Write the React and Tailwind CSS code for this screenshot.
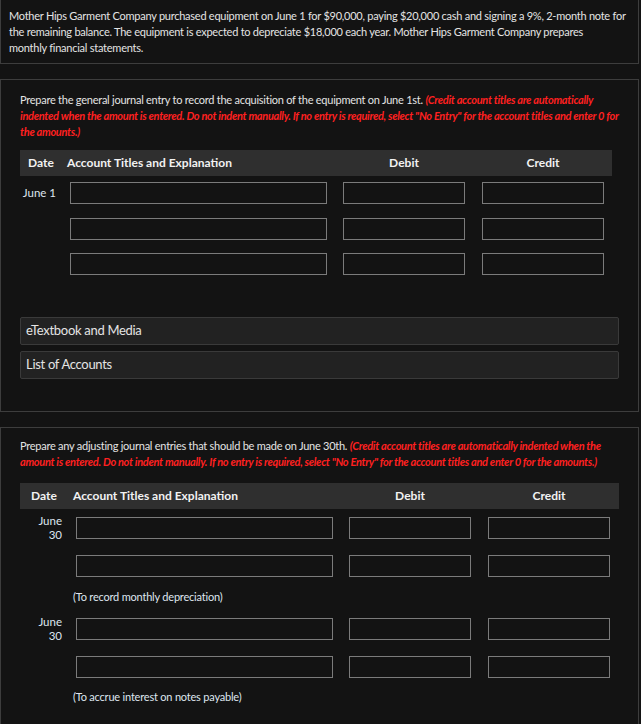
import React from "react";

const note =
  '(Credit account titles are automatically indented when the amount is entered. Do not indent manually. If no entry is required, select "No Entry" for the account titles and enter 0 for the amounts.)';

function Box({ w }) {
  return <div className={`h-[22px] border border-[#7b7b7b] bg-[#131313] ${w}`}></div>;
}

function Header({ dateCol, datePad, acctCol, wide }) {
  return (
    <div
      className={`flex h-[26px] items-center bg-[#2f2f2f] font-bold text-[12px] text-[#f2f2f2] ${
        wide ? "w-[599px]" : "w-[592px]"
      }`}
    >
      <div className={`${dateCol} ${datePad}`}>Date</div>
      <div className={acctCol}>Account Titles and Explanation</div>
      <div className="ml-[8px] w-[122px] text-center">Debit</div>
      <div className="ml-[17px] w-[122px] text-center">Credit</div>
    </div>
  );
}

function Row({ date, dateCol, acctCol, className }) {
  return (
    <div className={`flex items-center ${className || ""}`}>
      <div className={`${dateCol} pr-[11px] text-right leading-[14px] text-[11.5px] text-[#dfe6ef]`}>{date}</div>
      <div className={`${acctCol} pl-[3px]`}>
        <Box w="w-[257px]" />
      </div>
      <div className="ml-[8px]">
        <Box w="w-[122px]" />
      </div>
      <div className="ml-[17px]">
        <Box w="w-[122px]" />
      </div>
    </div>
  );
}

const juneThirty = (
  <>
    June
    <br />
    30
  </>
);

export default function App() {
  return (
    <div
      className="min-h-screen w-[641px] bg-[#131313] text-[11px] text-[#e4e4e4] pb-[40px]"
      style={{ fontFamily: "Lato, 'Open Sans', sans-serif" }}
    >
      {/* problem statement */}
      <div className="w-[639px] border border-t-0 border-[#3d3d3d] px-[8px] pt-[8px] pb-[7px] leading-[16px] tracking-[-0.25px]">
        Mother Hips Garment Company purchased equipment on June 1 for $90,000, paying $20,000 cash and signing a 9%,
        2-month note for
        <br />
        the remaining balance. The equipment is expected to depreciate $18,000 each year. Mother Hips Garment Company
        prepares
        <br />
        monthly financial statements.
      </div>

      {/* part 1 */}
      <div className="mt-[15px] w-[639px] border border-[#3d3d3d] px-[19px] pt-[12px] pb-[32px]">
        <p className="leading-[16px] tracking-[-0.25px]">
          Prepare the general journal entry to record the acquisition of the equipment on June 1st.{" "}
          <span className="font-bold italic tracking-[-0.3px] text-[#ff2020]">{note}</span>
        </p>
        <div className="mt-[10px]">
          <Header dateCol="w-[47px]" datePad="pl-[8px]" acctCol="w-[268px]" />
          <Row className="mt-[6px]" date="June 1" dateCol="w-[47px]" acctCol="w-[268px]" />
          <Row className="mt-[14px]" date="" dateCol="w-[47px]" acctCol="w-[268px]" />
          <Row className="mt-[13px]" date="" dateCol="w-[47px]" acctCol="w-[268px]" />
        </div>
        <div className="mt-[42px] flex h-[28px] w-[599px] items-center rounded-[2px] border border-[#3a3a3a] bg-[#222222] px-[5px] text-[13px] tracking-[-0.3px]">
          eTextbook and Media
        </div>
        <div className="mt-[6px] flex h-[28px] w-[599px] items-center rounded-[2px] border border-[#3a3a3a] bg-[#222222] px-[5px] text-[13px] tracking-[-0.3px]">
          List of Accounts
        </div>
      </div>

      {/* part 2 */}
      <div className="mt-[15px] w-[639px] border border-b-0 border-[#3d3d3d] px-[19px] pt-[10px] pb-[20px]">
        <p className="leading-[16px] tracking-[-0.25px]">
          Prepare any adjusting journal entries that should be made on June 30th.{" "}
          <span className="font-bold italic tracking-[-0.3px] text-[#ff2020]">{note}</span>
        </p>
        <div className="mt-[13px]">
          <Header dateCol="w-[53px]" datePad="pl-[11px]" acctCol="w-[268px]" wide />
          <Row className="mt-[5px]" date={juneThirty} dateCol="w-[53px]" acctCol="w-[268px]" />
          <Row className="mt-[13px]" date="" dateCol="w-[53px]" acctCol="w-[268px]" />
          <div className="mt-[12px] pl-[53px] leading-[16px] tracking-[-0.2px] text-[#dfe6ef]">
            (To record monthly depreciation)
          </div>
          <Row className="mt-[10px]" date={juneThirty} dateCol="w-[53px]" acctCol="w-[268px]" />
          <Row className="mt-[13px]" date="" dateCol="w-[53px]" acctCol="w-[268px]" />
          <div className="mt-[11px] pl-[53px] leading-[16px] tracking-[-0.2px] text-[#dfe6ef]">
            (To accrue interest on notes payable)
          </div>
        </div>
      </div>
    </div>
  );
}
